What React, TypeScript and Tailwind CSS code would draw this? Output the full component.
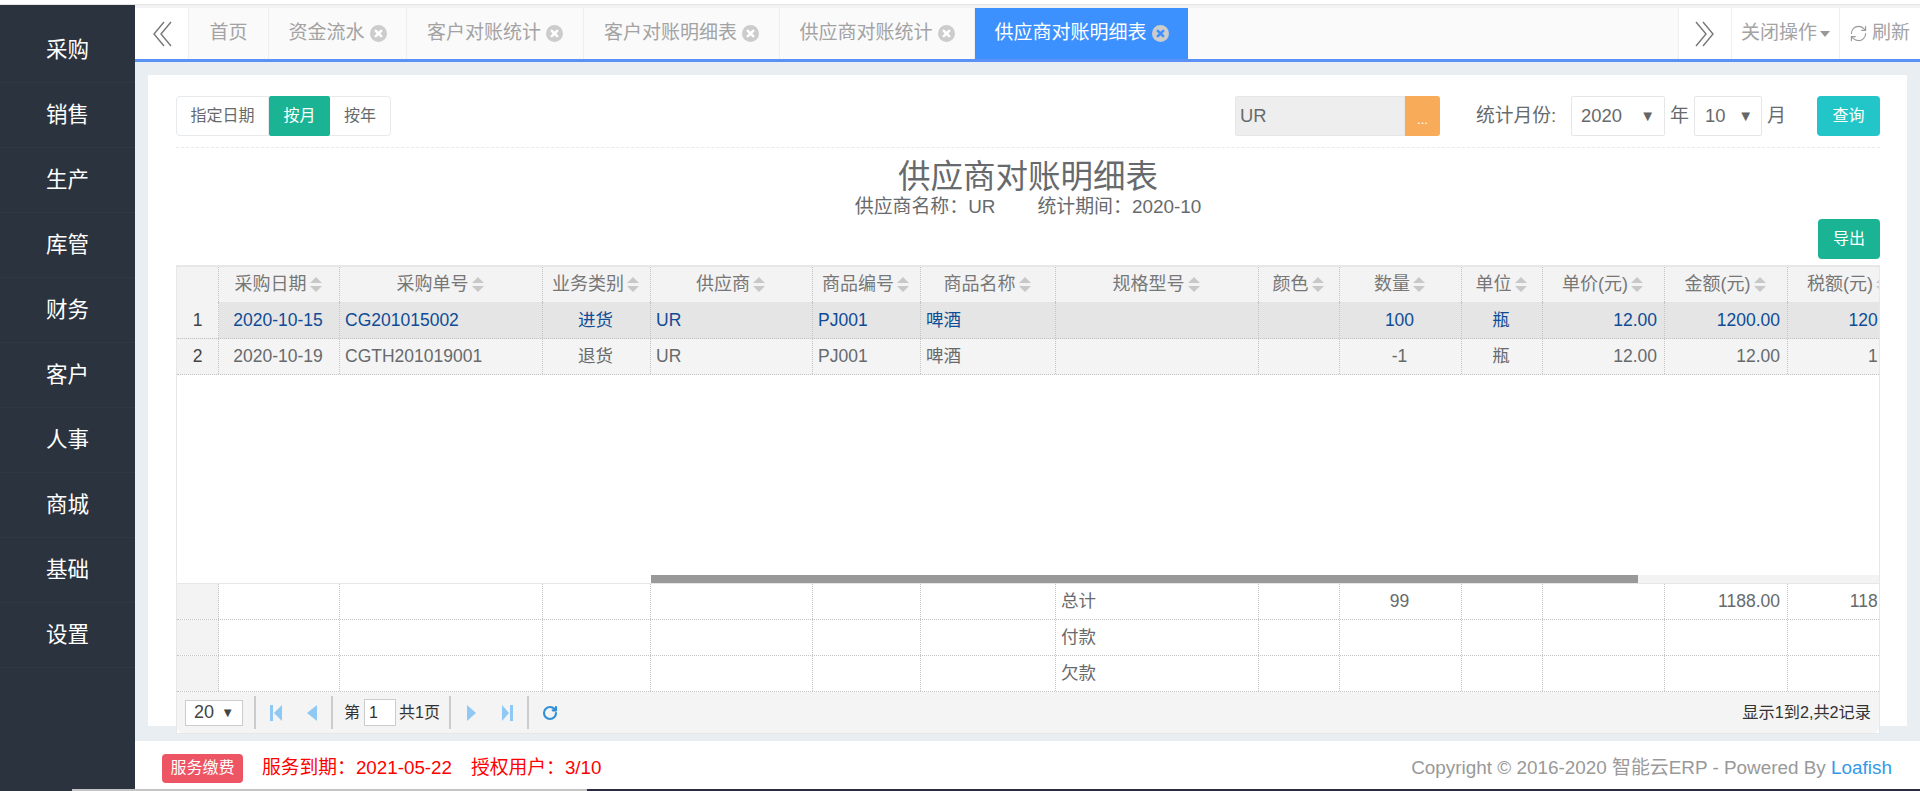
import { RefreshCw, RotateCw } from "lucide-react";

const menu = ["采购", "销售", "生产", "库管", "财务", "客户", "人事", "商城", "基础", "设置"];

const tabs = [
  { label: "资金流水", w: "w-[138px]" },
  { label: "客户对账统计", w: "w-[177px]" },
  { label: "客户对账明细表", w: "w-[196px]" },
  { label: "供应商对账统计", w: "w-[195px]" },
];

const columns = [
  { title: "采购日期", w: "w-[121px]", align: "text-center" },
  { title: "采购单号", w: "w-[203px]", align: "text-left" },
  { title: "业务类别", w: "w-[108px]", align: "text-center" },
  { title: "供应商", w: "w-[162px]", align: "text-left" },
  { title: "商品编号", w: "w-[108px]", align: "text-left" },
  { title: "商品名称", w: "w-[135px]", align: "text-left" },
  { title: "规格型号", w: "w-[203px]", align: "text-left" },
  { title: "颜色", w: "w-[81px]", align: "text-center" },
  { title: "数量", w: "w-[122px]", align: "text-center" },
  { title: "单位", w: "w-[81px]", align: "text-center" },
  { title: "单价(元)", w: "w-[122px]", align: "text-right" },
  { title: "金额(元)", w: "w-[123px]", align: "text-right" },
  { title: "税额(元)", w: "w-[122px]", align: "text-right" },
];

const rows = [
  ["2020-10-15", "CG201015002", "进货", "UR", "PJ001", "啤酒", "", "", "100", "瓶", "12.00", "1200.00", "120.00"],
  ["2020-10-19", "CGTH201019001", "退货", "UR", "PJ001", "啤酒", "", "", "-1", "瓶", "12.00", "12.00", "1.20"],
];

const totals = [
  ["", "", "", "", "", "", "总计", "", "99", "", "", "1188.00", "118.80"],
  ["", "", "", "", "", "", "付款", "", "", "", "", "", ""],
  ["", "", "", "", "", "", "欠款", "", "", "", "", "", ""],
];

function CloseDot({ active }: { active?: boolean }) {
  return (
    <svg className="w-[17px] h-[17px] shrink-0" viewBox="0 0 17 17" aria-hidden="true">
      <circle cx="8.5" cy="8.5" r="8.5" fill="#cccccc" />
      <path
        d="M5.8 5.8l5.4 5.4M11.2 5.8l-5.4 5.4"
        stroke={active ? "#3d91ff" : "#ffffff"}
        strokeWidth="2.6"
        strokeLinecap="round"
      />
    </svg>
  );
}

function DoubleChevron({ right }: { right?: boolean }) {
  return (
    <svg className="w-[20px] h-[26px]" viewBox="0 0 20 26" fill="none" stroke="#777777" strokeWidth="1.4" aria-hidden="true">
      {right ? <path d="M1 1l10 12L1 25M8 1l10 12L8 25" /> : <path d="M19 1L9 13l10 12M12 1L2 13l10 12" />}
    </svg>
  );
}

function SortIcon() {
  return (
    <svg className="inline-block w-[12px] h-[15px] ml-[3px] align-[-2px]" viewBox="0 0 12 15" fill="#c8c8c8" aria-hidden="true">
      <path d="M6 0l6 6H0zM0 9h12l-6 6z" />
    </svg>
  );
}

function Select({ value, className }: { value: string; className: string }) {
  return (
    <div className={`h-[40px] flex items-center justify-between border border-[#e5e6e7] rounded-[2px] bg-white text-[18.4px] text-[#676a6c] ${className}`}>
      <span>{value}</span>
      <span className="text-[15px] text-[#666666]">▼</span>
    </div>
  );
}

function GridCell({ col, text }: { col: (typeof columns)[number]; text: string }) {
  return (
    <div className={`${col.w} ${col.align} shrink-0 h-full pl-[5px] pr-[7px] border-r border-dotted border-[#c4c4c4] whitespace-nowrap overflow-hidden`}>
      {text}
    </div>
  );
}

export default function App() {
  return (
    <div className="relative w-[1920px] h-[791px] overflow-hidden bg-white font-['Liberation_Sans','Noto_Sans_CJK_SC',sans-serif]">
      <div className="h-[4px] bg-white" />
      <div className="h-[1px] bg-[#e4e4e4]" />

      <div className="flex h-[786px]">
        {/* Sidebar */}
        <aside className="w-[135px] shrink-0 bg-[#2b333e] pt-[13px]">
          {menu.map((item) => (
            <div
              key={item}
              className="h-[65px] flex items-center justify-center border-b border-[#2f3843] text-[21.5px] text-white"
            >
              {item}
            </div>
          ))}
        </aside>

        <main className="flex-1 min-w-0 flex flex-col">
          <div className="h-[3px] bg-[#f3f3f3]" />

          {/* Tabs */}
          <div className="h-[51px] flex bg-[#fafafa] text-[19px] text-[#a3a3a3]">
            <div className="w-[54px] flex items-center justify-center bg-white border-r border-[#eeeeee]">
              <DoubleChevron />
            </div>
            <div className="w-[80px] flex items-center justify-center border-r border-[#eeeeee]">首页</div>
            {tabs.map((tab) => (
              <div key={tab.label} className={`${tab.w} flex items-center justify-center gap-[5px] border-r border-[#eeeeee]`}>
                {tab.label}
                <CloseDot />
              </div>
            ))}
            <div className="w-[213px] flex items-center justify-center gap-[5px] bg-[#3d91ff] text-white">
              供应商对账明细表
              <CloseDot active />
            </div>
            <div className="flex-1" />
            <div className="w-[53px] flex items-center justify-center bg-white border-l border-[#eeeeee]">
              <DoubleChevron right />
            </div>
            <div className="w-[108px] flex items-center justify-center gap-[3px] bg-white border-l border-[#eeeeee]">
              关闭操作
              <svg className="w-[10px] h-[6px]" viewBox="0 0 10 6" fill="#999999" aria-hidden="true">
                <path d="M0 0h10L5 6z" />
              </svg>
            </div>
            <div className="w-[81px] flex items-center gap-[4px] pl-[9px] bg-white border-l border-[#eeeeee]">
              <RefreshCw className="w-[19px] h-[19px] text-[#999999]" strokeWidth={1.4} />
              刷新
            </div>
          </div>
          <div className="h-[3px] bg-[#5c92f8]" />

          {/* Content */}
          <div className="h-[679px] bg-[#e9eef3] pt-[13px] pl-[13px] pr-[13px]">
            <div className="h-[651px] bg-white pl-[28px] pr-[27px] pt-[21px] text-[#676a6c]">
              <div className="h-[52px] flex items-start border-b border-dashed border-[#e7eaec]">
                <div className="flex h-[40px] text-[16px]">
                  <div className="w-[93px] flex items-center justify-center border border-[#e7eaec] rounded-l-[4px]">指定日期</div>
                  <div className="w-[61px] flex items-center justify-center bg-[#1ab394] text-white rounded-[2px]">按月</div>
                  <div className="w-[61px] flex items-center justify-center border border-l-0 border-[#e7eaec] rounded-r-[4px]">按年</div>
                </div>
                <div className="ml-auto flex h-[40px] items-center">
                  <div className="w-[170px] h-full flex items-center pl-[4px] bg-[#eeeeee] border border-[#e5e6e7] rounded-l-[2px] text-[18.4px]">
                    UR
                  </div>
                  <div className="w-[35px] h-full flex items-end justify-center pb-[10px] bg-[#f8ac59] rounded-r-[3px] text-white text-[13px] leading-none">
                    ...
                  </div>
                  <span className="ml-[36px] text-[18.8px] w-[95px]">统计月份:</span>
                  <Select value="2020" className="w-[94px] pl-[9px] pr-[9px]" />
                  <span className="w-[29px] text-center text-[19px]">年</span>
                  <Select value="10" className="w-[68px] pl-[10px] pr-[8px]" />
                  <span className="w-[55px] pl-[5px] text-[19px]">月</span>
                  <div className="w-[63px] h-full flex items-center justify-center bg-[#23c6c8] text-white rounded-[4px] text-[16px]">
                    查询
                  </div>
                </div>
              </div>

              <div className="mt-[10px] h-[38px] leading-[38px] text-center text-[32.5px]">供应商对账明细表</div>
              <div className="h-[22px] leading-[22px] text-center text-[18.9px]">
                供应商名称：UR<span className="inline-block w-[42px]" />统计期间：2020-10
              </div>
              <div className="mt-[1px] flex justify-end">
                <div className="w-[62px] h-[40px] flex items-center justify-center bg-[#1ab394] text-white rounded-[4px] text-[16px]">
                  导出
                </div>
              </div>

              {/* Grid */}
              <div className="mt-[6px] w-[1704px] h-[469px] border-t-2 border-l border-r border-b border-[#e7e7e7] bg-white text-[17.5px]">
                <div className="overflow-hidden">
                  <div className="w-[1800px]">
                    <div className="flex h-[35px] leading-[35px] bg-[#f3f3f3] text-[#777777] text-[18px]">
                      <div className="w-[42px] shrink-0 border-r border-dotted border-[#c4c4c4]" />
                      {columns.map((col) => (
                        <div key={col.title} className={`${col.w} shrink-0 pr-[2px] text-center whitespace-nowrap border-r border-dotted border-[#c4c4c4]`}>
                          {col.title}
                          <SortIcon />
                        </div>
                      ))}
                    </div>
                    {rows.map((row, i) => (
                      <div
                        key={row[0]}
                        className={`flex border-b border-dotted border-[#c4c4c4] ${
                          i === 0 ? "h-[37px] leading-[37px] bg-[#e5e5e5] text-[#0f4c96]" : "h-[36px] leading-[35px] bg-[#f4f4f4] text-[#676a6c]"
                        }`}
                      >
                        <div className="w-[42px] shrink-0 h-full text-center bg-[#f3f3f3] text-[#444444] border-r border-dotted border-[#c4c4c4]">
                          {i + 1}
                        </div>
                        {columns.map((col, j) => (
                          <GridCell key={col.title} col={col} text={row[j]} />
                        ))}
                      </div>
                    ))}
                    <div className="h-[200px] bg-white" />
                  </div>
                </div>
                <div className="flex h-[8px]">
                  <div className="w-[474px] bg-white" />
                  <div className="w-[987px] bg-[#999999]" />
                  <div className="flex-1 bg-[#f3f3f3]" />
                </div>
                <div className="h-[1px] bg-[#e7e7e7]" />
                <div className="overflow-hidden">
                  <div className="w-[1800px]">
                    {totals.map((row) => (
                      <div key={row[6]} className="flex h-[36px] leading-[35px] border-b border-dotted border-[#c4c4c4] text-[#676a6c]">
                        <div className="w-[42px] shrink-0 h-full bg-[#f3f3f3] border-r border-dotted border-[#c4c4c4]" />
                        {columns.map((col, j) => (
                          <GridCell key={col.title} col={col} text={row[j]} />
                        ))}
                      </div>
                    ))}
                  </div>
                </div>

                {/* Pager */}
                <div className="h-[41px] flex items-center bg-[#f4f4f4] rounded-b-[6px] text-[16px] text-[#333333]">
                  <div className="ml-[8px] w-[58px] h-[26px] flex items-center justify-between pl-[8px] pr-[8px] bg-white border border-[#cccccc] text-[#444444] text-[18px]">
                    <span>20</span>
                    <span className="text-[13px]">▼</span>
                  </div>
                  <div className="ml-[11px] w-[2px] h-[33px] bg-[#cccccc]" />
                  <svg className="ml-[14px] w-[12px] h-[16px]" viewBox="0 0 12 16" fill="#8ec8f3" aria-hidden="true">
                    <path d="M0 0h3v16H0zM12 0v16L4 8z" />
                  </svg>
                  <svg className="ml-[25px] w-[10px] h-[16px]" viewBox="0 0 10 16" fill="#8ec8f3" aria-hidden="true">
                    <path d="M10 0v16L0 8z" />
                  </svg>
                  <div className="ml-[14px] w-[2px] h-[33px] bg-[#cccccc]" />
                  <span className="ml-[11px]">第</span>
                  <div className="ml-[4px] w-[32px] h-[27px] flex items-center pl-[4px] bg-white border border-[#cccccc]">1</div>
                  <span className="ml-[3px]">共1页</span>
                  <div className="ml-[9px] w-[2px] h-[33px] bg-[#cccccc]" />
                  <svg className="ml-[16px] w-[9px] h-[16px]" viewBox="0 0 9 16" fill="#8ec8f3" aria-hidden="true">
                    <path d="M0 0v16l9-8z" />
                  </svg>
                  <svg className="ml-[26px] w-[11px] h-[16px]" viewBox="0 0 11 16" fill="#8ec8f3" aria-hidden="true">
                    <path d="M0 0v16l7-8zM8 0h3v16H8z" />
                  </svg>
                  <div className="ml-[14px] w-[2px] h-[33px] bg-[#cccccc]" />
                  <RotateCw className="ml-[13px] w-[16px] h-[16px] text-[#2f90d8]" strokeWidth={3.2} />
                  <span className="ml-auto mr-[8px] text-[#333333] text-[16.2px]">显示1到2,共2记录</span>
                </div>
              </div>
            </div>
          </div>

          {/* Footer */}
          <div className="h-[50px] flex items-center pt-[4px] pl-[27px] pr-[28px] bg-white text-[18.8px]">
            <div className="w-[81px] h-[29px] flex items-center justify-center bg-[#ed5565] text-white rounded-[4px] text-[16px]">
              服务缴费
            </div>
            <span className="ml-[19px] text-[#ff0000]">服务到期：2021-05-22</span>
            <span className="ml-[19px] text-[#ff0000]">授权用户：3/10</span>
            <span className="ml-auto text-[#999999] text-[18.9px]">
              Copyright © 2016-2020 智能云ERP - Powered By <span className="text-[#3399e8]">Loafish</span>
            </span>
          </div>
        </main>
      </div>

      {/* Window edge that lies over the bottom of the page */}
      <div className="absolute bottom-0 left-[72px] right-0 h-[2px] flex">
        <div className="w-[515px] bg-[#c4c4c4]" />
        <div className="flex-1 bg-[#2b2b44]" />
      </div>
    </div>
  );
}
